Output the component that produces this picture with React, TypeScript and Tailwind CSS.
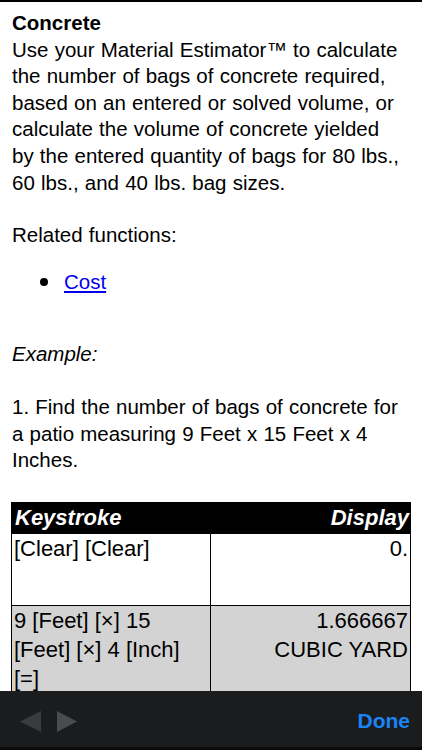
import { useState } from 'react';

type Row = { keys: string[]; display: string[]; shaded?: boolean; height: string };

const rows: Row[] = [
  { keys: ['[Clear] [Clear]'], display: ['0.'], height: 'h-[72px]' },
  {
    keys: ['9 [Feet] [×] 15', '[Feet] [×] 4 [Inch]', '[=]'],
    display: ['1.666667', 'CUBIC YARD'],
    shaded: true,
    height: 'h-[100px]',
  },
];

function Toolbar() {
  return (
    <div className="flex h-[59px] shrink-0 flex-col bg-[#1b1c1e]">
      <div className="flex flex-1 items-center justify-between pl-[20px] pr-[12px] pt-[4px]">
        <div className="flex items-center gap-[16px]">
          <svg width="21" height="21" viewBox="0 0 21 21" aria-hidden="true">
            <path d="M21 0 L0 10.5 L21 21 Z" fill="#3a3b3d" />
          </svg>
          <svg width="20" height="21" viewBox="0 0 20 21" aria-hidden="true">
            <path d="M0 0 L20 10.5 L0 21 Z" fill="#4a4b4d" />
          </svg>
        </div>
        <button type="button" className="text-[21px] font-bold text-[#1a84f7]">Done</button>
      </div>
      <div className="h-[3px] bg-[#0b0b0c]" />
    </div>
  );
}

export default function App() {
  const [page] = useState('concrete');

  return (
    <div
      className="flex h-[750px] w-[422px] flex-col overflow-hidden bg-white text-black"
      style={{ fontFamily: '"Liberation Sans", Arial, sans-serif' }}
      data-page={page}
    >
      <div className="flex-1 overflow-hidden border-t-2 border-black pl-[12px] pr-[2px] pt-[8px] text-[20.5px] leading-[26.6px] [word-spacing:0.5px]">
        <h1 className="font-bold">Concrete</h1>
        <p>
          Use your Material Estimator™ to calculate<br />
          the number of bags of concrete required,<br />
          based on an entered or solved volume, or<br />
          calculate the volume of concrete yielded<br />
          by the entered quantity of bags for 80 lbs.,<br />
          60 lbs., and 40 lbs. bag sizes.
        </p>
        <p className="mt-[26px]">Related functions:</p>
        <ul className="mt-[20px]">
          <li className="flex items-center">
            <span className="ml-[28px] mr-[16px] h-[8px] w-[8px] rounded-full bg-black" />
            <a href="#" className="text-[#0000ee] underline">Cost</a>
          </li>
        </ul>
        <p className="mt-[46px] italic">Example:</p>
        <p className="mt-[26px]">
          1. Find the number of bags of concrete for<br />
          a patio measuring 9 Feet x 15 Feet x 4<br />
          Inches.
        </p>

        <table className="mt-[28px] w-[400px] -ml-[1px] border-collapse border border-black text-[22px] leading-[29px] [word-spacing:0px]">
          <thead>
            <tr className="h-[31px] bg-black text-white">
              <th className="px-[3px] text-left font-bold italic">Keystroke</th>
              <th className="px-[1px] text-right font-bold italic">Display</th>
            </tr>
          </thead>
          <tbody>
            {rows.map((row, i) => (
              <tr key={i} className={`${row.height} ${row.shaded ? 'bg-[#d3d3d3]' : 'bg-white'}`}>
                <td className="w-[199px] border border-black px-[2px] align-top">
                  {row.keys.map((k) => (
                    <div key={k}>{k}</div>
                  ))}
                </td>
                <td className="border border-black px-[2px] text-right align-top">
                  {row.display.map((d) => (
                    <div key={d}>{d}</div>
                  ))}
                </td>
              </tr>
            ))}
          </tbody>
        </table>
      </div>
      <Toolbar />
    </div>
  );
}
